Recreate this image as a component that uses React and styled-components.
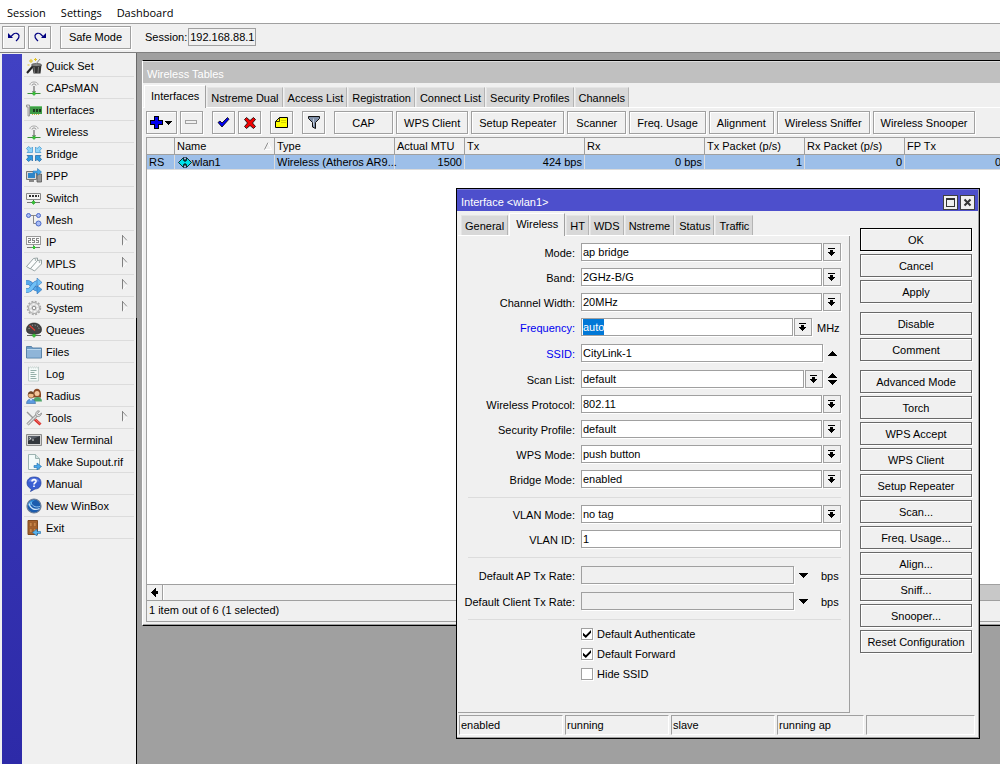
import {useEffect, useRef} from "react";
import styled, {createGlobalStyle} from "styled-components";

//<---------------------------------------Start of CSS - styling------------------------------------------------>

const GlobalStyle = createGlobalStyle`
  * {
    box-sizing: border-box;
  }

  body {
    margin: 0;
    background: #f0f0f0;
    color: #000;
    font-family: "Liberation Sans", Arial, sans-serif;
    font-size: 11px;
    line-height: 16px;
  }

  button, input, select {
    margin: 0;
    padding: 0;
    font: inherit;
    color: inherit;
    outline: none;
  }

  svg {
    display: block;
    flex: none;
  }
`;

const Page = styled.div`
  display: flex;
  flex-direction: column;
  height: 100vh;
  overflow: hidden;
`;

const MenuBar = styled.nav`
  display: flex;
  gap: 15px;
  height: 24px;
  padding: 2px 7px 0;
  background: #fff;
  border-bottom: 1px solid #a0a0a0;
`;

const MenuButton = styled.button`
  border: none;
  background: none;
  font-family: "Open Sans", "Noto Sans", sans-serif;
`;

const MainBar = styled.div`
  display: flex;
  align-items: center;
  gap: 3px;
  height: 29px;
  padding: 0 2px 2px;
  border-bottom: 1px solid #808080;
`;

const Button = styled.button`
  display: flex;
  align-items: center;
  justify-content: center;
  flex: none;
  height: 23px;
  min-width: ${props => props.$icon ? "23px" : "59px"};
  padding: ${props => props.$icon ? "0 3px" : "0 7px"};
  margin-right: ${props => props.$gap ? "6px" : "0"};
  border: 1px solid ${props => props.$tone || "#a0a0a0"};
  background: #f0f0f0;
  box-shadow: inset 1px 1px 0 #fff, 1px 1px 0 #fff;
  white-space: nowrap;
`;

const SafeModeButton = styled(Button)`
  width: 71px;
`;

const ActionButton = styled(Button)`
  padding: 0;
`;

const SessionBox = styled.div`
  display: flex;
  align-items: center;
  margin-left: 11px;
`;

const SessionInput = styled.input`
  width: 68px;
  height: 18px;
  margin-left: 1px;
  padding-left: 1px;
  border: 1px solid #a0a0a0;
  background: #f0f0f0;
`;

const Body = styled.div`
  display: flex;
  flex: 1;
  min-height: 0;
`;

const Stripe = styled.div`
  width: 20px;
  margin: 1px 2px 0;
  background: linear-gradient(#4141c3, #2d2aa8);
`;

const SideBar = styled.nav`
  width: 110px;
  margin-right: 2px;
  padding-top: 2px;
`;

const SideItem = styled.button`
  display: flex;
  align-items: center;
  gap: 4px;
  width: 100%;
  height: 22px;
  padding: 0 6px 0 2px;
  border: none;
  border-bottom: 1px solid #dcdcdc;
  background: none;
  text-align: left;

  span {
    flex: 1;
    white-space: nowrap;
  }
`;

const SideEdge = styled.div`
  width: 1px;
  background: linear-gradient(#696969 265px, #000 265px);
`;

const Desktop = styled.main`
  position: relative;
  flex: 1;
  overflow: hidden;
  background: #a0a0a0;
`;

const TablesWindow = styled.section`
  position: absolute;
  top: 7px;
  left: 5px;
  right: -40px;
  display: flex;
  flex-direction: column;
  height: 566px;
  padding-bottom: 3px;
  border: 1px solid #000;
  border-left-color: #fff;
  background: #f0f0f0;
  box-shadow: inset 0 -1px 0 #a0a0a0;
`;

const DialogWindow = styled.section`
  position: absolute;
  top: 135px;
  left: 319px;
  width: 524px;
  border: 1px solid #000;
  background: #f0f0f0;
  box-shadow: inset -1px -1px 0 #a0a0a0;
`;

const TitleBar = styled.header`
  display: flex;
  align-items: center;
  gap: 2px;
  height: 22px;
  padding: 3px 3px 0 4px;
  margin-right: 1px;
  background: ${props => props.$active ? "#4d4fcc" : "#c0c0c0"};
  border-top: 1px solid ${props => props.$active ? "#7a7bd8" : "#dcdcdc"};
  color: #fff;
`;

const Title = styled.h2`
  flex: 1;
  margin: 0;
  font-size: 11px;
  font-weight: 400;
`;

const TitleButton = styled.button`
  display: flex;
  align-items: center;
  justify-content: center;
  width: 15px;
  height: 15px;
  border: 1px solid #404040;
  background: #f0f0f0;
`;

const TabRow = styled.div`
  display: flex;
  align-items: flex-end;
  gap: 1px;
  height: 25px;
  padding-left: ${props => props.$inset ? "3px" : "1px"};
  border-bottom: 1px solid #fff;
`;

const Tab = styled.button`
  flex: none;
  height: ${props => props.$active ? "23px" : "20px"};
  margin-bottom: ${props => props.$active ? "-1px" : "0"};
  padding: ${props => props.$active ? "0 6px 2px" : "0 3px"};
  border: solid;
  border-width: 1px 1px 0 1px;
  border-color: ${props => props.$active ? "#fff #a0a0a0 #fff #fff" : "#e4e4e4 #b4b4b4 #fff #e4e4e4"};
  background: ${props => props.$active ? "#f0f0f0" : "#d8d8d8"};
`;

const TableTools = styled.div`
  display: flex;
  gap: 3px;
  padding: 3px;
`;

const Grid = styled.div`
  display: flex;
  flex-direction: column;
  flex: 1;
  margin-left: 3px;
  border: solid #a0a0a0;
  border-width: 1px 0 1px 1px;
`;

const GridBody = styled.div`
  flex: 1;
  background: #fff;
`;

const Table = styled.table`
  width: 878px;
  table-layout: fixed;
  border-collapse: separate;
  border-spacing: 0;
`;

const Th = styled.th`
  width: ${props => props.$width}px;
  height: 17px;
  padding: 0 2px;
  border: solid #a0a0a0;
  border-width: 0 1px 1px 0;
  background: #f0f0f0;
  font-weight: 400;
  line-height: 14px;
  text-align: left;
  white-space: nowrap;
`;

const HeadCell = styled.div`
  display: flex;
  align-items: center;
  justify-content: space-between;
  height: 16px;
`;

const Td = styled.td`
  height: 15px;
  padding: 0 2px;
  border: solid #dcdcdc;
  border-width: 0 1px 1px 0;
  background: #9dbfe9;
  line-height: 14px;
  text-align: ${props => props.$right ? "right" : "left"};
  white-space: nowrap;
`;

const NameCell = styled.div`
  display: flex;
  align-items: center;
  height: 14px;
  padding-left: 1px;
`;

const ScrollBar = styled.div`
  display: flex;
  height: 17px;
  border: solid #a0a0a0;
  border-width: 1px 0;
  background: #c8c8c8;
`;

const ScrollArrow = styled.button`
  display: flex;
  align-items: center;
  justify-content: center;
  width: 16px;
  border: none;
  border-right: 1px solid #a0a0a0;
  background: #f0f0f0;
`;

const ScrollThumb = styled.div`
  width: 75%;
  border-left: 1px solid #fff;
  background: #f0f0f0;
`;

const TableStatus = styled.footer`
  height: 20px;
  padding: 1px 2px;
`;

const DialogBody = styled.div`
  display: flex;
  gap: 10px;
`;

const TabArea = styled.div`
  flex: 1;
  margin-left: 1px;
`;

const TabPanel = styled.div`
  height: 477px;
  padding: 4px 8px 0 10px;
  border: solid #a0a0a0;
  border-width: 0 1px 1px 0;
`;

const Row = styled.div`
  display: flex;
  align-items: flex-start;
  height: ${props => props.$tall ? "26px" : "25px"};
  padding-top: ${props => props.$tall ? "4px" : "3px"};
`;

const Label = styled.label`
  width: 107px;
  margin-right: 6px;
  display: flex;
  justify-content: flex-end;
  color: ${props => props.$changed ? "#0000f0" : "#000"};
  line-height: 20px;
  white-space: nowrap;
`;

const Controls = styled.div`
  display: flex;
  flex: 1;
  gap: 1px;
  height: 18px;
`;

const TextInput = styled.input`
  flex: 1;
  min-width: 0;
  padding-left: 1px;
  border: 1px solid #a0a0a0;
  border-radius: 0;
  background: #fff;
  box-shadow: 1px 1px 0 #fff;

  &::selection {
    background: #0078d7;
    color: #fff;
  }

  &:disabled {
    background: #f0f0f0;
  }
`;

const Select = styled.select`
  flex: 1;
  min-width: 0;
  padding-left: 1px;
  appearance: none;
  border: 1px solid #a0a0a0;
  border-radius: 0;
  background: #fff;
  box-shadow: 1px 1px 0 #fff;
`;

const DropButton = styled.button`
  display: flex;
  align-items: center;
  justify-content: center;
  width: 18px;
  padding-right: 1px;
  border: 1px solid #a0a0a0;
  background: #f0f0f0;
  box-shadow: 1px 1px 0 #fff;
`;

const ArrowButton = styled.button`
  display: flex;
  align-items: center;
  justify-content: center;
  width: 17px;
  border: none;
  background: none;
`;

const Unit = styled.span`
  width: 28px;
  padding-left: ${props => props.$rate ? "8px" : "4px"};
  line-height: 20px;
`;

const Separator = styled.hr`
  height: 1px;
  margin: 5px 0 4px;
  border: none;
  background: #dcdcdc;
`;

const CheckRow = styled.label`
  display: flex;
  align-items: center;
  gap: 4px;
  height: 20px;
  padding-left: 113px;
`;

const CheckBox = styled.input`
  display: grid;
  place-items: center;
  width: 12px;
  height: 12px;
  appearance: none;
  border: 1px solid #a0a0a0;
  background: #fff;
  box-shadow: 1px 1px 0 #fff;

  &:checked::before {
    content: "";
    width: 8px;
    height: 8px;
    background: #000;
    clip-path: polygon(0 35%, 35% 65%, 100% 0, 100% 35%, 35% 100%, 0 70%);
  }
`;

const Actions = styled.div`
  display: flex;
  flex-direction: column;
  gap: 9px;
  width: 112px;
  margin: 17px 7px 0 0;
`;

const ActionGroup = styled.div`
  display: flex;
  flex-direction: column;
  gap: 3px;
`;

const StatusRow = styled.footer`
  display: grid;
  grid-template-columns: 104px 104px 104px 87px 109px;
  gap: 2px;
  padding: 2px 2px 3px;
`;

const StatusCell = styled.div`
  height: 20px;
  padding: 1px;
  border: 1px solid #a0a0a0;
  border-right-color: #fff;
  border-bottom-color: #fff;
`;

//<---------------------------------------End of CSS - styling------------------------------------------------>

//<---------------------------------------Start of icons------------------------------------------------------>

const Icon = ({children, w = 16, h = 16, crisp}) => (
    <svg width={w} height={h} viewBox={`0 0 ${w} ${h}`} fill="none" aria-hidden="true"
         shapeRendering={crisp ? "crispEdges" : "auto"}>
        {children}
    </svg>
);

const icons = {
    quickset: (
        <Icon>
            <path d="M1 15l7-8" stroke="#222" strokeWidth="2"/>
            <path d="M6 7h9.500l-1 8.500h-7z" fill="#333"/>
            <path d="M8 9l.5 6M12.500 9l-.5 6" stroke="#777"/>
            <ellipse cx="10.500" cy="7" rx="5" ry="1.500" fill="#888" stroke="#222" strokeWidth=".6"/>
            <path d="M5 1v4M3 3h4M9.500 0v3M8 1.500h3M1.500 7h2" stroke="#e2c227"/>
            <path d="M10 6l4-5" stroke="#888"/>
        </Icon>
    ),
    antenna: (
        <Icon>
            <path d="M4 5C3.500 1 12.500 1 12 5" stroke="#a8a8a8"/>
            <path d="M6 5.500C6 3.500 10 3.500 10 5.500" stroke="#8a8a8a"/>
            <path d="M8 6v7" stroke="#888" strokeWidth="1.500"/>
            <path d="M6 11.500h4" stroke="#999"/>
            <path d="M1.500 13.500h13" stroke="#3f8f3f"/>
            <path d="M8 11.500l2 2-2 2-2-2z" fill="#35c435" stroke="#1d8a1d" strokeWidth=".5"/>
        </Icon>
    ),
    card: (
        <Icon>
            <path d="M.5 3h3v11H2V5H.5z" fill="#ddd" stroke="#888" strokeWidth=".8"/>
            <path d="M4 4h12v8H4z" fill="#3f9c46"/>
            <path d="M4 4h12v1H4z" fill="#70c476"/>
            <path d="M7 7h2v3H7zM10 7h2v3h-2zM13 7h2v3h-2z" fill="#1d3d1f"/>
            <path d="M6 12.500h8" stroke="#c9b13c" strokeDasharray="1 1"/>
        </Icon>
    ),
    bridge: (
        <Icon>
            <g fill="#8fd4f8" stroke="#3c93cf" strokeWidth=".7">
                <path d="M.5 2.500l2-2 2.500 2L6.500 1v5.500H1L2.500 5z"/>
                <path d="M15.500 2.500l-2-2-2.500 2L9.500 1v5.500H15L13.500 5z"/>
            </g>
            <g fill="#2f9be0" stroke="#1b62a0" strokeWidth=".7">
                <path d="M.5 13.500l2 2 2.500-2L6.500 15V9.500H1L2.500 11z"/>
                <path d="M15.500 13.500l-2 2-2.500-2L9.500 15V9.500H15L13.500 11z"/>
            </g>
        </Icon>
    ),
    ppp: (
        <Icon>
            <path d="M11 6h4.500v8H11z" fill="#999" stroke="#555" strokeWidth=".8"/>
            <path d="M.5 3.500h10v8H.5z" fill="#d8d8d8" stroke="#777"/>
            <path d="M2 5h7v5H2z" fill="#2f86c9"/>
            <path d="M3 12h5v2H3z" fill="#888"/>
            <path d="M7 3h4.500V.5l4 3.500-4 3.500V5H7z" fill="#48a8ea" stroke="#1d6bab" strokeWidth=".5"/>
        </Icon>
    ),
    switch: (
        <Icon>
            <path d="M.5 3.500h14v6H.5z" fill="#f4f4f4" stroke="#888"/>
            <path d="M3 6h10" stroke="#333" strokeWidth="2" strokeDasharray="2 1"/>
            <path d="M7.500 10v2" stroke="#555"/>
            <path d="M1 12.500h13" stroke="#777"/>
            <path d="M7.500 10.500l2 2-2 2-2-2z" fill="#35c435" stroke="#1d8a1d" strokeWidth=".5"/>
        </Icon>
    ),
    mesh: (
        <Icon>
            <path d="M5 3.500h5M7.500 3.500v8h3" stroke="#888"/>
            <g fill="#a9bcf4" stroke="#4a68c8">
                <circle cx="2.500" cy="3.500" r="2"/>
                <circle cx="12.500" cy="3.500" r="2"/>
                <circle cx="12.500" cy="11.500" r="2.500"/>
            </g>
        </Icon>
    ),
    ip: (
        <Icon crisp>
            <path d="M.5 2.500h14v8H.5z" fill="#fafafa" stroke="#999"/>
            <path d="M2 4.500h3M4.500 4v3M2 6.500h3M2.500 6v3M2 8.500h3M9 4.500H6M6.500 4v3M6 6.500h3M8.500 7v2M6 8.500h3M13 4.500h-3M10.500 4v3M10 6.500h3M12.500 7v2M10 8.500h3"
                  stroke="#888"/>
            <path d="M1 13.500h13M7.500 11v2" stroke="#777"/>
            <path d="M7.500 11.500l2 2-2 2-2-2z" fill="#35c435"/>
        </Icon>
    ),
    mpls: (
        <Icon>
            <g fill="#fbfdfd" stroke="#8b9899" strokeWidth=".9">
                <path d="M.5 10.500l7-8 4-.500v4l-7 7z"/>
                <path d="M4.500 12.500l7-8 4-.500v4l-7 7z"/>
            </g>
            <circle cx="13.500" cy="6" r=".8" fill="#8b9899"/>
            <circle cx="9.500" cy="4" r=".8" fill="#8b9899"/>
        </Icon>
    ),
    routing: (
        <Icon>
            <path d="M0 4.500h2c4 0 5 7 10 7" stroke="#2f72b8" strokeWidth="4.500"/>
            <path d="M0 4.500h2c4 0 5 7 10 7" stroke="#58a9ea" strokeWidth="3.500"/>
            <path d="M11 7.500l5 4-5 4.500z" fill="#4aa1e8" stroke="#2767ad" strokeWidth=".5"/>
            <path d="M0 12.500h2c4 0 5-8 10-8" stroke="#2f72b8" strokeWidth="4.500"/>
            <path d="M0 12.500h2c4 0 5-8 10-8" stroke="#6fc0f6" strokeWidth="3.500"/>
            <path d="M11 0l5 4.500-5 4z" fill="#6fc0f6" stroke="#2767ad" strokeWidth=".5"/>
        </Icon>
    ),
    system: (
        <Icon>
            <circle cx="8" cy="8" r="6.500" stroke="#a8a8a8" strokeWidth="1.500" strokeDasharray="2 1.400"/>
            <circle cx="8" cy="8" r="5.500" fill="#dcdcdc" stroke="#a8a8a8"/>
            <circle cx="8" cy="8" r="3.800" stroke="#f6f6f6" strokeWidth="1.600" strokeDasharray="2 2"/>
            <circle cx="8" cy="8" r="1.800" fill="#fafafa" stroke="#8a8a8a"/>
        </Icon>
    ),
    queues: (
        <Icon>
            <path d="M1 10C-1 5 3 1 8 1s9 4 7 9c-2 3-12 3-14 0z" fill="#444" stroke="#222" strokeWidth=".6"/>
            <path d="M3 7C3 5 5 3 8 3s5 2 5 4" stroke="#aaa" strokeDasharray="1 1.500"/>
            <path d="M3.500 3.500L9 8.500" stroke="#e23b2e" strokeWidth="1.200"/>
            <path d="M1 13.500h14" stroke="#666"/>
            <path d="M8 11.500l2 2-2 2-2-2z" fill="#35c435" stroke="#1d8a1d" strokeWidth=".5"/>
        </Icon>
    ),
    files: (
        <Icon>
            <path d="M.5 2.500h5l1 1.500h9v10H.5z" fill="#6d9cc6" stroke="#5b83a8"/>
            <path d="M1 5.500h14v8H1z" fill="#8fb5d8"/>
            <path d="M1 5.500h14" stroke="#bcd8ee"/>
        </Icon>
    ),
    log: (
        <Icon>
            <path d="M2.500 1v14h10V1l-1 .8-1-.8-1 .8-1-.8-1 .8-1-.8-1 .8-1-.8-1 .8z" fill="#f4faf8"
                  stroke="#b4c4c0" strokeWidth=".8"/>
            <path d="M4.500 4.500h6M4.500 6.500h4M4.500 8.500h6M4.500 10.500h5M4.500 12.500h6" stroke="#94aea8"/>
        </Icon>
    ),
    radius: (
        <Icon>
            <path d="M7 6c0-7 8-7 8 0v3.500H7z" fill="#8b4a25"/>
            <circle cx="11" cy="5.500" r="2.500" fill="#f3c79d"/>
            <path d="M7 13.500c0-6 9-6 9 0z" fill="#4fa56a"/>
            <circle cx="5" cy="7" r="3" fill="#f0bd8b" stroke="#7a4a22" strokeWidth=".6"/>
            <path d="M2 6.500c0-4.500 6-4.500 6 0-2-.5-4-1.500-6 0z" fill="#6e4526"/>
            <path d="M.5 15.500c0-6 9-6 9 0z" fill="#5a9be0" stroke="#3467a5" strokeWidth=".6"/>
            <path d="M4 11l1 2 1-2z" fill="#fff"/>
        </Icon>
    ),
    tools: (
        <Icon>
            <path d="M1 2l8 8" stroke="#999" strokeWidth="1.500"/>
            <path d="M9 9.500l5.500 5" stroke="#d9302c" strokeWidth="3"/>
            <path d="M9 9l5.500 5" stroke="#f07570"/>
            <path d="M1.500 14.500L11 5" stroke="#888" strokeWidth="3"/>
            <path d="M1.500 14.500L11 5" stroke="#ddd" strokeWidth="1.500"/>
            <path d="M13.500 1C11 0 9 3 10 5.500 12 8 15.500 6 15.500 3l-2.500 2-1.500-1.500z" fill="#ddd" stroke="#888" strokeWidth=".8"/>
        </Icon>
    ),
    terminal: (
        <Icon>
            <path d="M.5 2.500h15v11H.5z" fill="#d4d4d4" stroke="#8c8c8c"/>
            <path d="M2 4h12v8H2z" fill="#33373d"/>
            <path d="M2 4h12l-12 5z" fill="#5a6069"/>
            <path d="M3.500 5.500L5 6.500 3.500 7.500M6 8h2" stroke="#fff" strokeWidth=".8"/>
        </Icon>
    ),
    supout: (
        <Icon>
            <path d="M2.500.5h7l4 4v11h-11z" fill="#f3faf9" stroke="#9db3b1"/>
            <path d="M9.500.5v4h4" fill="#d2e3e1" stroke="#9db3b1"/>
            <path d="M8 11.500h3V9l4.500 3.500L11 16v-2.500H8z" fill="#48a8ea" stroke="#1d6bab" strokeWidth=".6"/>
        </Icon>
    ),
    manual: (
        <Icon>
            <path d="M8 1C3 1 1 4 1 7c0 3 2 5 4.500 6l-1 2.500L9 13c4 0 6-3 6-6 0-4-2-6-7-6z" fill="#3a5fd2" stroke="#233f9e"
                  strokeWidth=".7"/>
            <path d="M2.500 5.500C4 1 12 1 13.500 5.500z" fill="#6c88e2"/>
            <path d="M6 5.500C6 3 10.500 3 10 5.500 9.500 7 8 7 8 8.500M8 9.500V11" stroke="#fff" strokeWidth="1.600"/>
        </Icon>
    ),
    winbox: (
        <Icon>
            <circle cx="8" cy="8" r="7" fill="#1b5cae" stroke="#6d7f98" strokeWidth="1.200"/>
            <path d="M2 8c0-4 3-6 7-6-3 1-4 3-3 5-2 0-3 0-4 1z" fill="#3a97dd"/>
            <path d="M3 5.500c1 4.500 5 7.500 10.500 5" stroke="#cfe6fa" strokeWidth="1.200"/>
            <path d="M5 4c.5 3.500 4 6 9 4.500" stroke="#8fc4f2"/>
        </Icon>
    ),
    exit: (
        <Icon>
            <path d="M2 .5h9.500v14H2z" fill="#a8622d" stroke="#7f4a20"/>
            <path d="M3.500 2.500H6v4H3.500zM7.500 2.500H10v4H7.500zM3.500 8.500H6v4H3.500zM7.500 8.500H10v4H7.500z" fill="#c98549" stroke="#8b5526"
                  strokeWidth=".5"/>
            <path d="M14.500 11.500H11V9l-4.500 3.500L11 16v-2.500h3.500z" fill="#5ab4ee" stroke="#1d6bab" strokeWidth=".6"/>
        </Icon>
    ),
};

const SubMenuArrow = () => (
    <Icon w={7} h={13}>
        <path d="M1.500 10.500V0" stroke="#808080"/>
        <path d="M1.500.5l4.500 5" stroke="#909090"/>
        <path d="M6 5.500l-4.500 5" stroke="#fff"/>
    </Icon>
);

const UndoIcon = ({flip}) => (
    <Icon w={12} h={10}>
        <g transform={flip ? "matrix(-1 0 0 1 12 0)" : undefined}>
            <path d="M3 4.500l2.500-2.500c2-1.500 5-.5 5.500 1.500.3 2-.5 3-1.500 4L8 9" stroke="#000080" strokeWidth="1.200"/>
            <path d="M0 1v5h5z" fill="#000080"/>
        </g>
    </Icon>
);

const PlusIcon = () => (
    <Icon w={23} h={13} crisp>
        <path d="M4.500.5h4v4h4v4h-4v4h-4v-4h-4v-4h4z" fill="#0000f0" stroke="#000"/>
        <path d="M15 5h7v1h-7zM16 6h5v1h-5zM17 7h3v1h-3zM18 8h1v1h-1z" fill="#000"/>
    </Icon>
);

const MinusIcon = () => (
    <Icon w={13} h={5} crisp>
        <path d="M.5.5h11v3H.5z" fill="#f0f0f0" stroke="#a0a0a0"/>
    </Icon>
);

const CheckIcon = () => (
    <Icon w={13} h={11}>
        <path d="M1 5.500L3 4l2 2L10.500.5l1.500 1.700L5 10z" fill="#0000f0" stroke="#000" strokeWidth=".8"/>
    </Icon>
);

const CrossIcon = () => (
    <Icon w={12} h={12}>
        <path d="M.5 2.500l2-2L6 3.500l3.500-3 2 2L8.500 6l3 3.500-2 2L6 8.500l-3.500 3-2-2L3.500 6z" fill="#f00000" stroke="#000"
              strokeWidth=".8"/>
    </Icon>
);

const NoteIcon = () => (
    <Icon w={13} h={11}>
        <path d="M4.500.5h8v10H.5v-6z" fill="#ffff00" stroke="#000"/>
        <path d="M4.500.5v4h-4" stroke="#000" strokeWidth=".8"/>
        <path d="M6 3.500h5M6 5.500h5" stroke="#d4d400"/>
    </Icon>
);

const FilterIcon = () => (
    <Icon w={12} h={13}>
        <path d="M.5.5h11v2l-4 4v6l-3-1.500V6.500l-4-4z" fill="#7f8fa8" stroke="#111"/>
        <path d="M5.500 2.500v7" stroke="#c3cddb"/>
    </Icon>
);

const WlanIcon = () => (
    <Icon w={14} h={11}>
        <path d="M.5 5.500l5-5v3h3v-3l5 5-5 5v-3h-3v3z" fill="#00e0e8" stroke="#000" strokeWidth=".8"/>
        <path d="M7 0v11" stroke="#000" strokeDasharray="1 1"/>
    </Icon>
);

const SortIcon = () => (
    <Icon w={8} h={8}>
        <path d="M.5 7.500L4 .5" stroke="#909090"/>
        <path d="M4 .5l3.500 7H1" stroke="#fff"/>
    </Icon>
);

const DropIcon = () => (
    <Icon w={7} h={8} crisp>
        <path d="M0 0h7v1H0zM2 2h3v2h2v1H6v1H5v1H4v1H3V7H2V6H1V5H0V4h2z" fill="#000"/>
    </Icon>
);

const LeftIcon = () => (
    <Icon w={7} h={9} crisp>
        <path d="M4 0h1v3h2v3H5v3H4V8H3V7H2V6H1V5H0V4h1V3h1V2h1V1h1z" fill="#000"/>
    </Icon>
);

const TriangleIcon = ({up, down}) => (
    <Icon w={9} h={up && down ? 12 : 5} crisp>
        {up && <path d="M0 5h9V4H8V3H7V2H6V1H5V0H4v1H3v1H2v1H1v1H0z" fill="#000"/>}
        {down && <path transform={up ? "translate(0 7)" : undefined}
                       d="M0 0h9v1H8v1H7v1H6v1H5v1H4V4H3V3H2V2H1V1H0z" fill="#000"/>}
    </Icon>
);

const MaxIcon = () => (
    <Icon w={9} h={9} crisp>
        <path d="M.5 1.500h8v7h-8z" stroke="#333"/>
        <path d="M0 0h9v2H0z" fill="#333"/>
    </Icon>
);

const CloseIcon = () => (
    <Icon w={9} h={9}>
        <path d="M1.500 1.500l6 6M7.500 1.500l-6 6" stroke="#333" strokeWidth="2"/>
    </Icon>
);

//<---------------------------------------End of icons-------------------------------------------------------->

//<---------------------------------------Start of data------------------------------------------------------->

const sideItems = [
    {text: "Quick Set", icon: "quickset"},
    {text: "CAPsMAN", icon: "antenna"},
    {text: "Interfaces", icon: "card"},
    {text: "Wireless", icon: "antenna"},
    {text: "Bridge", icon: "bridge"},
    {text: "PPP", icon: "ppp"},
    {text: "Switch", icon: "switch"},
    {text: "Mesh", icon: "mesh"},
    {text: "IP", icon: "ip", sub: true},
    {text: "MPLS", icon: "mpls", sub: true},
    {text: "Routing", icon: "routing", sub: true},
    {text: "System", icon: "system", sub: true},
    {text: "Queues", icon: "queues"},
    {text: "Files", icon: "files"},
    {text: "Log", icon: "log"},
    {text: "Radius", icon: "radius"},
    {text: "Tools", icon: "tools", sub: true},
    {text: "New Terminal", icon: "terminal"},
    {text: "Make Supout.rif", icon: "supout"},
    {text: "Manual", icon: "manual"},
    {text: "New WinBox", icon: "winbox"},
    {text: "Exit", icon: "exit"},
];

const tableTabs = ["Interfaces", "Nstreme Dual", "Access List", "Registration", "Connect List", "Security Profiles", "Channels"];
const tableButtons = ["CAP", "WPS Client", "Setup Repeater", "Scanner", "Freq. Usage", "Alignment", "Wireless Sniffer", "Wireless Snooper"];

const columns = [
    {title: "", width: 28, value: "RS"},
    {title: "Name", width: 100, value: "wlan1"},
    {title: "Type", width: 120, value: "Wireless (Atheros AR9..."},
    {title: "Actual MTU", width: 70, value: "1500", right: true},
    {title: "Tx", width: 120, value: "424 bps", right: true},
    {title: "Rx", width: 120, value: "0 bps", right: true},
    {title: "Tx Packet (p/s)", width: 100, value: "1", right: true},
    {title: "Rx Packet (p/s)", width: 100, value: "0", right: true},
    {title: "FP Tx", width: 120, value: "0 bps", right: true},
];

const dialogTabs = ["General", "Wireless", "HT", "WDS", "Nstreme", "Status", "Traffic"];

const actionGroups = [
    ["OK", "Cancel", "Apply"],
    ["Disable", "Comment"],
    ["Advanced Mode", "Torch", "WPS Accept", "WPS Client", "Setup Repeater", "Scan...", "Freq. Usage...", "Align...", "Sniff...", "Snooper...", "Reset Configuration"],
];

const statuses = ["enabled", "running", "slave", "running ap", ""];

//<---------------------------------------End of data--------------------------------------------------------->

//<---------------------------------------Start of HTML - coding---------------------------------------------->

const ComboRow = ({id, label, value}) => (
    <Row>
        <Label htmlFor={id}>{label}:</Label>
        <Controls>
            <Select id={id} defaultValue={value}>
                <option>{value}</option>
            </Select>
            <DropButton aria-label={`Open ${label}`}><DropIcon/></DropButton>
        </Controls>
    </Row>
);

const RateRow = ({id, label}) => (
    <Row $tall>
        <Label htmlFor={id}>{label}:</Label>
        <Controls>
            <TextInput id={id} disabled/>
            <ArrowButton aria-label={`Expand ${label}`}><TriangleIcon down/></ArrowButton>
            <Unit $rate>bps</Unit>
        </Controls>
    </Row>
);

const WirelessTables = () => (
    <TablesWindow>
        <TitleBar><Title>Wireless Tables</Title></TitleBar>
        <TabRow>
            {tableTabs.map((tab, i) => <Tab key={tab} $active={i === 0}>{tab}</Tab>)}
        </TabRow>
        <TableTools>
            <Button $icon aria-label="Add"><PlusIcon/></Button>
            <Button $icon $gap aria-label="Remove"><MinusIcon/></Button>
            <Button $icon aria-label="Enable"><CheckIcon/></Button>
            <Button $icon $gap aria-label="Disable"><CrossIcon/></Button>
            <Button $icon $gap aria-label="Comment"><NoteIcon/></Button>
            <Button $icon $gap aria-label="Filter"><FilterIcon/></Button>
            {tableButtons.map(text => <Button key={text}>{text}</Button>)}
        </TableTools>
        <Grid>
            <GridBody>
                <Table>
                    <thead>
                    <tr>
                        {columns.map(col => (
                            <Th key={col.title} $width={col.width}>
                                <HeadCell>{col.title}{col.title === "Name" && <SortIcon/>}</HeadCell>
                            </Th>
                        ))}
                    </tr>
                    </thead>
                    <tbody>
                    <tr>
                        {columns.map(col => (
                            <Td key={col.title} $right={col.right}>
                                {col.title === "Name" ? <NameCell><WlanIcon/>{col.value}</NameCell> : col.value}
                            </Td>
                        ))}
                    </tr>
                    </tbody>
                </Table>
            </GridBody>
            <ScrollBar>
                <ScrollArrow aria-label="Scroll left"><LeftIcon/></ScrollArrow>
                <ScrollThumb/>
            </ScrollBar>
            <TableStatus>1 item out of 6 (1 selected)</TableStatus>
        </Grid>
    </TablesWindow>
);

const InterfaceDialog = () => {
    const frequency = useRef(null);

    useEffect(() => {
        frequency.current.focus();
        frequency.current.select();
    }, []);

    return (
        <DialogWindow>
            <TitleBar $active>
                <Title>Interface &lt;wlan1&gt;</Title>
                <TitleButton aria-label="Maximize"><MaxIcon/></TitleButton>
                <TitleButton aria-label="Close"><CloseIcon/></TitleButton>
            </TitleBar>
            <DialogBody>
                <TabArea>
                    <TabRow $inset>
                        {dialogTabs.map((tab, i) => <Tab key={tab} $active={i === 1}>{tab}</Tab>)}
                    </TabRow>
                    <TabPanel>
                        <ComboRow id="mode" label="Mode" value="ap bridge"/>
                        <ComboRow id="band" label="Band" value="2GHz-B/G"/>
                        <ComboRow id="width" label="Channel Width" value="20MHz"/>
                        <Row>
                            <Label htmlFor="frequency" $changed>Frequency:</Label>
                            <Controls>
                                <TextInput id="frequency" ref={frequency} defaultValue="auto"/>
                                <DropButton aria-label="Open Frequency"><DropIcon/></DropButton>
                                <Unit>MHz</Unit>
                            </Controls>
                        </Row>
                        <Row $tall>
                            <Label htmlFor="ssid" $changed>SSID:</Label>
                            <Controls>
                                <TextInput id="ssid" defaultValue="CityLink-1"/>
                                <ArrowButton aria-label="Collapse SSID"><TriangleIcon up/></ArrowButton>
                            </Controls>
                        </Row>
                        <Row $tall>
                            <Label htmlFor="scanlist">Scan List:</Label>
                            <Controls>
                                <Select id="scanlist" defaultValue="default">
                                    <option>default</option>
                                </Select>
                                <DropButton aria-label="Open Scan List"><DropIcon/></DropButton>
                                <ArrowButton aria-label="Add or remove Scan List"><TriangleIcon up down/></ArrowButton>
                            </Controls>
                        </Row>
                        <ComboRow id="protocol" label="Wireless Protocol" value="802.11"/>
                        <ComboRow id="security" label="Security Profile" value="default"/>
                        <ComboRow id="wps" label="WPS Mode" value="push button"/>
                        <ComboRow id="bridge" label="Bridge Mode" value="enabled"/>
                        <Separator/>
                        <ComboRow id="vlanmode" label="VLAN Mode" value="no tag"/>
                        <Row>
                            <Label htmlFor="vlanid">VLAN ID:</Label>
                            <Controls>
                                <TextInput id="vlanid" defaultValue="1"/>
                            </Controls>
                        </Row>
                        <Separator/>
                        <RateRow id="aprate" label="Default AP Tx Rate"/>
                        <RateRow id="clientrate" label="Default Client Tx Rate"/>
                        <Separator/>
                        <CheckRow><CheckBox type="checkbox" defaultChecked/>Default Authenticate</CheckRow>
                        <CheckRow><CheckBox type="checkbox" defaultChecked/>Default Forward</CheckRow>
                        <CheckRow><CheckBox type="checkbox"/>Hide SSID</CheckRow>
                    </TabPanel>
                </TabArea>
                <Actions>
                    {actionGroups.map(group => (
                        <ActionGroup key={group[0]}>
                            {group.map(text => (
                                <ActionButton key={text} $tone={text === "OK" ? "#000" : "#696969"}>{text}</ActionButton>
                            ))}
                        </ActionGroup>
                    ))}
                </Actions>
            </DialogBody>
            <StatusRow>
                {statuses.map(text => <StatusCell key={text}>{text}</StatusCell>)}
            </StatusRow>
        </DialogWindow>
    );
};

export default function App() {
    return (
        <Page>
            <GlobalStyle/>
            <MenuBar>
                <MenuButton>Session</MenuButton>
                <MenuButton>Settings</MenuButton>
                <MenuButton>Dashboard</MenuButton>
            </MenuBar>
            <MainBar>
                <Button $icon aria-label="Undo"><UndoIcon/></Button>
                <Button $icon $gap aria-label="Redo"><UndoIcon flip/></Button>
                <SafeModeButton>Safe Mode</SafeModeButton>
                <SessionBox>
                    <label htmlFor="session">Session:</label>
                    <SessionInput id="session" defaultValue="192.168.88.1" readOnly/>
                </SessionBox>
            </MainBar>
            <Body>
                <Stripe/>
                <SideBar>
                    {sideItems.map(item => (
                        <SideItem key={item.text}>
                            {icons[item.icon]}
                            <span>{item.text}</span>
                            {item.sub && <SubMenuArrow/>}
                        </SideItem>
                    ))}
                </SideBar>
                <SideEdge/>
                <Desktop>
                    <WirelessTables/>
                    <InterfaceDialog/>
                </Desktop>
            </Body>
        </Page>
    );
}

//<---------------------------------------End of HTML - coding---------------------------------------------->
